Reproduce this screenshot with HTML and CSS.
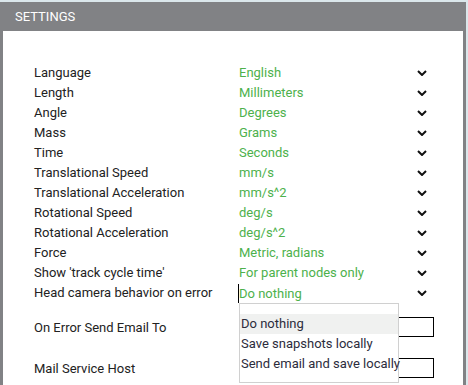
FILE: index.html
```html
<!DOCTYPE html>
<html lang="en">
<head>
    <meta charset="UTF-8">
    <meta name="viewport" content="width=device-width, initial-scale=1.0">
    <title>Settings</title>
    <link rel="stylesheet" href="styles.css">
</head>
<body>
    <div class="dialog">
        <div class="dialog_title">SETTINGS</div>
        <div class="dialog_body">
            <div class="settings">
                <div class="row"><span class="label">Language</span><span class="value">English</span><svg class="chev" viewBox="0 0 10 6"><polyline points="1,1 5,5 9,1"/></svg></div>
                <div class="row"><span class="label">Length</span><span class="value">Millimeters</span><svg class="chev" viewBox="0 0 10 6"><polyline points="1,1 5,5 9,1"/></svg></div>
                <div class="row"><span class="label">Angle</span><span class="value">Degrees</span><svg class="chev" viewBox="0 0 10 6"><polyline points="1,1 5,5 9,1"/></svg></div>
                <div class="row"><span class="label">Mass</span><span class="value">Grams</span><svg class="chev" viewBox="0 0 10 6"><polyline points="1,1 5,5 9,1"/></svg></div>
                <div class="row"><span class="label">Time</span><span class="value">Seconds</span><svg class="chev" viewBox="0 0 10 6"><polyline points="1,1 5,5 9,1"/></svg></div>
                <div class="row"><span class="label">Translational Speed</span><span class="value">mm/s</span><svg class="chev" viewBox="0 0 10 6"><polyline points="1,1 5,5 9,1"/></svg></div>
                <div class="row"><span class="label">Translational Acceleration</span><span class="value">mm/s^2</span><svg class="chev" viewBox="0 0 10 6"><polyline points="1,1 5,5 9,1"/></svg></div>
                <div class="row"><span class="label">Rotational Speed</span><span class="value">deg/s</span><svg class="chev" viewBox="0 0 10 6"><polyline points="1,1 5,5 9,1"/></svg></div>
                <div class="row"><span class="label">Rotational Acceleration</span><span class="value">deg/s^2</span><svg class="chev" viewBox="0 0 10 6"><polyline points="1,1 5,5 9,1"/></svg></div>
                <div class="row"><span class="label">Force</span><span class="value">Metric, radians</span><svg class="chev" viewBox="0 0 10 6"><polyline points="1,1 5,5 9,1"/></svg></div>
                <div class="row"><span class="label">Show 'track cycle time'</span><span class="value">For parent nodes only</span><svg class="chev" viewBox="0 0 10 6"><polyline points="1,1 5,5 9,1"/></svg></div>
                <div class="row open">
                    <span class="label">Head camera behavior on error</span>
                    <span class="value focused">Do nothing</span>
                    <svg class="chev" viewBox="0 0 10 6"><polyline points="1,1 5,5 9,1"/></svg>
                    <ul class="options">
                        <li class="active">Do nothing</li>
                        <li>Save snapshots locally</li>
                        <li>Send email and save locally</li>
                    </ul>
                </div>
            </div>
            <div class="field first">
                <span class="label">On Error Send Email To</span>
                <input type="text" class="text_input">
            </div>
            <div class="field">
                <span class="label">Mail Service Host</span>
                <input type="text" class="text_input">
            </div>
        </div>
    </div>
</body>
</html>
```

FILE: styles.css
```css
body {
    margin: 0;
    background: #dbe7eb;
    font-family: Roboto, "Liberation Sans", sans-serif;
    font-size: 13px;
    color: #222;
    overflow: hidden;
}
.dialog {
    margin-top: 2px;
    width: 466px;
}
.dialog_title {
    height: 29px;
    line-height: 30px;
    padding-left: 15px;
    background: #818285;
    color: #fff;
    font-size: 13px;
}
.dialog_body {
    box-sizing: border-box;
    height: 354px;
    background: #fff;
    border-left: 3px solid #818285;
    border-right: 3px solid #818285;
    padding: 32px 0 0 31px;
}
.row {
    display: grid;
    grid-template-columns: 205px 178px 10px;
    height: 20px;
    line-height: 20px;
    align-items: center;
}
.open {
    position: relative;
}
.value {
    color: #4db14c;
}
.focused {
    border-left: 1px solid #000;
    height: 19px;
    line-height: 19px;
    margin-left: -1px;
}
.chev {
    width: 10px;
    height: 6px;
    fill: none;
    stroke: #111;
    stroke-width: 2;
}
.options {
    position: absolute;
    left: 205px;
    top: 20px;
    width: 158px;
    margin: 0;
    padding: 10px 0 8px 0;
    list-style: none;
    background: #fff;
    border: 1px solid #d0d0d0;
    color: #2c2c3c;
    z-index: 2;
}
.options li {
    height: 20px;
    line-height: 20px;
    padding-left: 1px;
    white-space: nowrap;
}
.options .active {
    background: #f0f1f0;
}
.field {
    display: grid;
    grid-template-columns: 205px 195px;
    align-items: center;
    margin-top: 21px;
}
.field.first {
    margin-top: 14px;
}
.text_input {
    box-sizing: border-box;
    width: 195px;
    height: 20px;
    margin: 0;
    border: 1px solid #000;
    padding: 0;
}
```
